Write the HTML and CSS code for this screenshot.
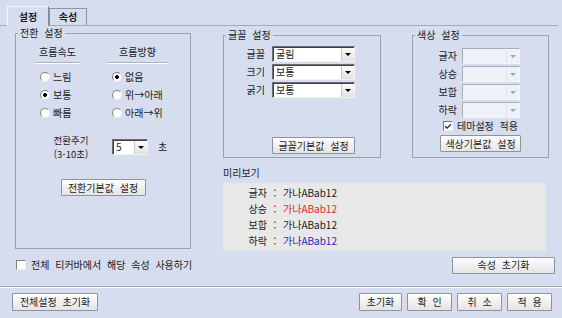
FILE: index.html
```html
<!DOCTYPE html>
<html lang="ko">
<head>
    <meta charset="UTF-8">
    <title>티커바 설정</title>
    <link rel="stylesheet" href="styles.css">
</head>
<body>

    <div class="tabs">
        <div class="tab active">설정</div>
        <div class="tab">속성</div>
    </div>

    <div class="main">
        <fieldset class="group g-trans">
            <legend>전환 설정</legend>

            <div class="cols">
                <div class="col col1">
                    <div class="col-head">흐름속도</div>
                    <div class="opts">
                        <div class="opt"><span class="radio"></span>느림</div>
                        <div class="opt"><span class="radio on"></span>보통</div>
                        <div class="opt"><span class="radio"></span>빠름</div>
                    </div>
                </div>
                <div class="col col2">
                    <div class="col-head">흐름방향</div>
                    <div class="opts">
                        <div class="opt"><span class="radio on"></span>없음</div>
                        <div class="opt"><span class="radio"></span>위→아래</div>
                        <div class="opt"><span class="radio"></span>아래→위</div>
                    </div>
                </div>
            </div>

            <div class="period">
                <div class="period-label">
                    <div>전환주기</div>
                    <div>(3-10초)</div>
                </div>
                <div class="select sel-period"><span class="val">5</span><span class="arrow"></span></div>
                <span class="unit">초</span>
            </div>

            <div class="center">
                <button class="btn btn-trans">전환기본값 설정</button>
            </div>
        </fieldset>

        <div class="mid">
            <div class="mid-row">
                <fieldset class="group g-font">
                    <legend>글꼴 설정</legend>
                    <div class="fields">
                        <div class="field"><label>글꼴</label><div class="select"><span class="val">굴림</span><span class="arrow"></span></div></div>
                        <div class="field"><label>크기</label><div class="select"><span class="val">보통</span><span class="arrow"></span></div></div>
                        <div class="field"><label>굵기</label><div class="select"><span class="val">보통</span><span class="arrow"></span></div></div>
                    </div>
                    <button class="btn btn-font">글꼴기본값 설정</button>
                </fieldset>

                <fieldset class="group g-color">
                    <legend>색상 설정</legend>
                    <div class="fields">
                        <div class="field"><label>글자</label><div class="select off"><span class="val"></span><span class="arrow"></span></div></div>
                        <div class="field"><label>상승</label><div class="select off"><span class="val"></span><span class="arrow"></span></div></div>
                        <div class="field"><label>보합</label><div class="select off"><span class="val"></span><span class="arrow"></span></div></div>
                        <div class="field"><label>하락</label><div class="select off"><span class="val"></span><span class="arrow"></span></div></div>
                    </div>
                    <div class="theme">
                        <span class="check on">
                            <svg width="8" height="8" viewBox="0 0 8 8"><path d="M1 3.5 L3 5.5 L7 1.5 L7 3 L3 7 L1 5 Z" fill="#000"/></svg>
                        </span>테마설정 적용
                    </div>
                    <button class="btn btn-color">색상기본값 설정</button>
                </fieldset>
            </div>

            <div class="preview-title">미리보기</div>
            <div class="preview">
                <div class="pv-row"><span class="pv-label">글자</span><span class="pv-colon">:</span><span>가나ABab12</span></div>
                <div class="pv-row"><span class="pv-label">상승</span><span class="pv-colon">:</span><span class="up">가나ABab12</span></div>
                <div class="pv-row"><span class="pv-label">보합</span><span class="pv-colon">:</span><span>가나ABab12</span></div>
                <div class="pv-row"><span class="pv-label">하락</span><span class="pv-colon">:</span><span class="down">가나ABab12</span></div>
            </div>
        </div>
    </div>

    <div class="options">
        <div class="all-ticker"><span class="check"></span>전체 티커바에서 해당 속성 사용하기</div>
        <button class="btn btn-reset">속성 초기화</button>
    </div>

    <div class="sep"></div>

    <div class="footer">
        <button class="btn btn-all">전체설정 초기화</button>
        <div class="footer-right">
            <button class="btn btn-init">초기화</button>
            <button class="btn btn-sm">확 인</button>
            <button class="btn btn-sm">취 소</button>
            <button class="btn btn-sm">적 용</button>
        </div>
    </div>

</body>
</html>
```

FILE: styles.css
```css
* {
    box-sizing: border-box;
}

body {
    margin: 0;
    width: 562px;
    height: 318px;
    overflow: hidden;
    background-color: #d5ddee;
    font-family: "Noto Sans CJK KR", sans-serif;
    font-size: 10px;
    line-height: 14px;
    word-spacing: 3px;
    color: #1b1b1b;
}

/* tabs */
.tabs {
    display: flex;
    align-items: flex-end;
    height: 26px;
    padding-left: 7px;
    margin-right: 4px;
    border-bottom: 1px solid #a3abba;
}

.tab {
    width: 38px;
    height: 17px;
    display: flex;
    align-items: center;
    justify-content: center;
    border: 1px solid #8e96a6;
    border-bottom: none;
    font-weight: bold;
    background-color: #d5ddee;
}

.tab.active {
    width: 42px;
    height: 20px;
    margin-bottom: -1px;
    border-color: #f4f6fb #7f8797 #7f8797 #f4f6fb;
}

/* group boxes */
.main {
    display: flex;
    padding-left: 15px;
}

.group {
    margin: 0;
    padding: 0;
    min-width: 0;
    border: 1px solid #9aa2ae;
}

.group legend {
    margin-left: 2px;
    padding: 0 2px;
    line-height: 14px;
}

.g-trans {
    width: 176px;
    height: 223px;
}

.cols {
    display: flex;
    gap: 27px;
    padding-left: 19px;
    margin-top: 5px;
}

.col1 { width: 45px; }
.col2 { width: 61px; }

.col-head {
    text-align: center;
    padding-bottom: 3px;
    border-bottom: 1px solid #aab2c0;
    box-shadow: 0 1px 0 #ffffff;
}

.opts {
    margin-top: 5px;
}

.opt {
    display: flex;
    align-items: center;
    height: 18px;
    padding-left: 5px;
    white-space: nowrap;
}

.radio {
    width: 10px;
    height: 10px;
    margin-right: 3px;
    border-radius: 50%;
    border: 1px solid;
    border-color: #858585 #eeeeee #eeeeee #858585;
    background: #ffffff;
}

.radio.on {
    background: radial-gradient(circle, #000 0 1.6px, #ffffff 2.2px);
}

.period {
    display: flex;
    align-items: center;
    margin-top: 11px;
    padding-left: 36px;
}

.period-label {
    width: 38px;
    font-size: 9.5px;
    line-height: 14px;
    text-align: center;
    white-space: nowrap;
    word-spacing: 0;
}

.sel-period {
    width: 36px;
    margin-left: 22px;
}

.unit {
    margin-left: 10px;
}

.center {
    display: flex;
    justify-content: center;
    margin-top: 18px;
}

/* selects */
.select {
    display: flex;
    height: 16px;
    background: #ffffff;
    border: 1px solid;
    border-color: #6f6f6f #f2f2f2 #f2f2f2 #6f6f6f;
    box-shadow: inset 1px 1px 0 #404040;
}

.select .val {
    flex: 1;
    padding-left: 3px;
    line-height: 14px;
}

.select .arrow {
    width: 13px;
    margin-top: 1px;
    display: flex;
    align-items: center;
    justify-content: center;
    background: linear-gradient(#fbfbfb, #e1e1e1);
    border-left: 1px solid #c9c9c9;
}

.select .arrow::after {
    content: "";
    border-left: 3px solid transparent;
    border-right: 3px solid transparent;
    border-top: 3px solid #000000;
}

.select.off {
    background: #eef1f7;
    border-color: #a9afba #f4f6fa #f4f6fa #a9afba;
    box-shadow: none;
}

.select.off .arrow {
    background: #eef1f7;
    border-left: 1px solid #dde1e8;
}

.select.off .arrow::after {
    border-top-color: #a0a6b0;
}

/* font / colour boxes */
.mid {
    width: 326px;
    margin-left: 32px;
    margin-top: 2px;
}

.mid-row {
    display: flex;
    gap: 31px;
}

.g-font {
    width: 158px;
    height: 130px;
}

.g-color {
    width: 137px;
    height: 130px;
}

.field {
    display: flex;
    align-items: center;
    height: 16px;
    margin-bottom: 2px;
}

.g-font .fields {
    margin-top: 4px;
}

.g-font label {
    width: 41px;
    margin-right: 7px;
    text-align: right;
}

.g-font .select {
    width: 83px;
}

.g-color .fields {
    margin-top: 6px;
}

.g-color label {
    width: 44px;
    margin-right: 5px;
    text-align: right;
}

.g-color .select {
    width: 58px;
}

.theme {
    display: flex;
    align-items: center;
    height: 14px;
    margin-top: -1px;
    padding-left: 30px;
}

.check {
    width: 10px;
    height: 10px;
    margin-right: 4px;
    display: flex;
    align-items: center;
    justify-content: center;
    background: #ffffff;
    border: 1px solid;
    border-color: #7c7c7c #eeeeee #eeeeee #7c7c7c;
}

/* buttons */
.btn {
    height: 17px;
    padding: 0;
    font-family: "Noto Sans CJK KR", sans-serif;
    font-size: 10px;
    line-height: 14px;
    word-spacing: 3px;
    color: #1b1b1b;
    background: linear-gradient(#fefefe, #e4e4e4);
    border: 1px solid #8f949c;
    border-radius: 1px;
    white-space: nowrap;
}

.btn-trans { width: 85px; }

.btn-font {
    display: block;
    width: 83px;
    margin: 39px 0 0 48px;
}

.btn-color {
    display: block;
    width: 81px;
    margin: 2px 0 0 27px;
}

/* preview */
.preview-title {
    margin-top: 8px;
}

.preview {
    width: 323px;
    height: 68px;
    margin-top: 3px;
    padding-top: 2px;
    background-color: #e8e8e8;
}

.pv-row {
    display: flex;
    line-height: 16px;
}

.pv-label {
    width: 44px;
    text-align: right;
}

.pv-colon {
    width: 16px;
    text-align: center;
}

.up { color: #e0262b; }
.down { color: #2828b8; }

/* bottom */
.options {
    display: flex;
    align-items: center;
    justify-content: space-between;
    height: 18px;
    margin-top: 5px;
    padding: 0 7px 0 16px;
}

.all-ticker {
    display: flex;
    align-items: center;
}

.all-ticker .check {
    margin-right: 5px;
}

.btn-reset { width: 103px; }

.sep {
    margin-top: 12px;
    border-top: 1px solid #a3abba;
    border-bottom: 1px solid #ffffff;
}

.footer {
    display: flex;
    padding: 5px 10px 0 12px;
}

.footer .btn {
    height: 18px;
}

.btn-all { width: 86px; }

.footer-right {
    display: flex;
    gap: 5px;
    margin-left: auto;
}

.btn-init { width: 43px; }
.btn-sm { width: 45px; }
```
